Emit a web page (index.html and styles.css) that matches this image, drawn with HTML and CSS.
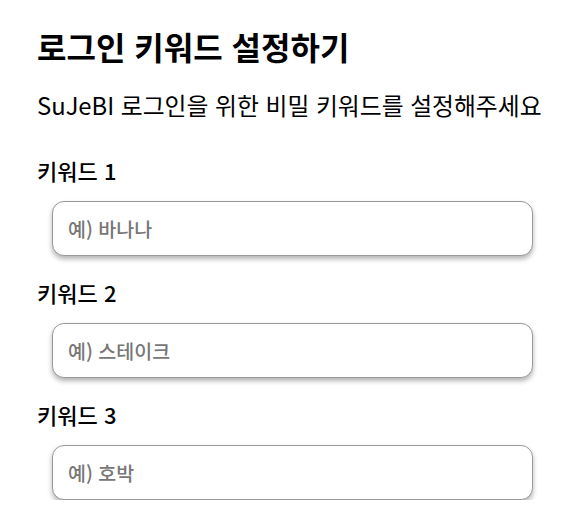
FILE: index.html
```html
<!DOCTYPE html>
<html lang="ko">
<head>
<meta charset="utf-8">
<link rel="stylesheet" href="styles.css">
</head>
<body>
<main class="page">
  <h1 class="title">로그인 키워드 설정하기</h1>
  <p class="subtitle">SuJeBI 로그인을 위한 비밀 키워드를 설정해주세요</p>
  <div class="fields">
    <div class="field">
      <label class="label" for="k1">키워드 1</label>
      <input class="input" id="k1" type="text" placeholder="예) 바나나">
    </div>
    <div class="field">
      <label class="label" for="k2">키워드 2</label>
      <input class="input" id="k2" type="text" placeholder="예) 스테이크">
    </div>
    <div class="field">
      <label class="label" for="k3">키워드 3</label>
      <input class="input" id="k3" type="text" placeholder="예) 호박">
    </div>
  </div>
</main>
</body>
</html>
```
FILE: styles.css
```css
* { box-sizing: border-box; }
html, body { margin: 0; padding: 0; background: #fff; }
body {
  font-family: "Noto Sans CJK KR", "Noto Sans", sans-serif;
  color: #000;
}
.page {
  padding: 26px 0 0 37px;
  display: flex;
  flex-direction: column;
}
.title {
  margin: 0;
  font-size: 32px;
  line-height: 40px;
  font-weight: 700;
}
.subtitle {
  margin: 24px 0 0;
  font-size: 23.8px;
  line-height: 30px;
  font-weight: 400;
}
.fields {
  margin-top: 36px;
  display: flex;
  flex-direction: column;
  gap: 22px;
}
.field {
  display: flex;
  flex-direction: column;
  gap: 17px;
}
.label {
  font-size: 22px;
  line-height: 28px;
  font-weight: 500;
}
.input {
  margin-left: 15px;
  width: 481px;
  height: 55px;
  padding: 0 15px;
  border: 1px solid #9a9a9a;
  border-radius: 12px;
  box-shadow: 0 3px 5px rgba(0, 0, 0, 0.3);
  font-family: "Noto Sans CJK KR", "Noto Sans", sans-serif;
  font-size: 19.5px;
  font-weight: 500;
  color: #333;
  outline: none;
  background: #fff;
}
.input::placeholder { color: #777; }
```
